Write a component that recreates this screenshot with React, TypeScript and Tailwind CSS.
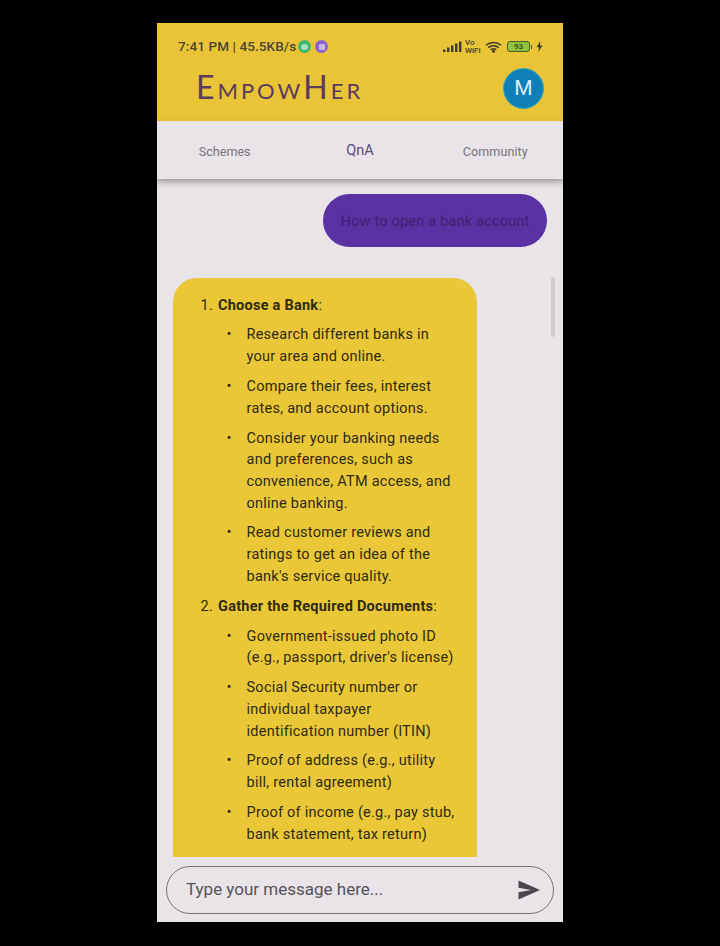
import { ReactNode } from 'react';

const SECTIONS = [
  {
    title: 'Choose a Bank',
    num: '1.',
    items: [
      ['Research different banks in', 'your area and online.'],
      ['Compare their fees, interest', 'rates, and account options.'],
      ['Consider your banking needs', 'and preferences, such as', 'convenience, ATM access, and', 'online banking.'],
      ['Read customer reviews and', 'ratings to get an idea of the', "bank's service quality."],
    ],
  },
  {
    title: 'Gather the Required Documents',
    num: '2.',
    items: [
      ['Government-issued photo ID', "(e.g., passport, driver's license)"],
      ['Social Security number or', 'individual taxpayer', 'identification number (ITIN)'],
      ['Proof of address (e.g., utility', 'bill, rental agreement)'],
      ['Proof of income (e.g., pay stub,', 'bank statement, tax return)'],
    ],
  },
];

function Line({ children }: { children: ReactNode }) {
  return <div className="h-[21.7px] leading-[21.7px] whitespace-nowrap">{children}</div>;
}

function StatusIcons() {
  return (
    <div className="flex items-center text-[#3f3a2a]">
      <svg width="19" height="11" viewBox="0 0 19 11" fill="currentColor">
        <rect x="0" y="8.5" width="2.4" height="2.5" />
        <rect x="4" y="6.5" width="2.4" height="4.5" />
        <rect x="8" y="4.5" width="2.4" height="6.5" />
        <rect x="12" y="2.5" width="2.4" height="8.5" />
        <rect x="16" y="0.5" width="2.4" height="10.5" />
      </svg>
      <div className="ml-[3px] flex flex-col items-start text-[8px] leading-[8px] font-medium w-[18px]">
        <span>Vo</span>
        <span>WiFi</span>
      </div>
      <svg className="ml-[2px]" width="17" height="12" viewBox="0 0 18 12" fill="none" stroke="currentColor" strokeWidth="1.6">
        <path d="M1 4.2C5.5 0.2 12.5 0.2 17 4.2" />
        <path d="M3.5 6.6C6.6 4 11.4 4 14.5 6.6" />
        <path d="M6 9C7.8 7.7 10.2 7.7 12 9" />
        <circle cx="9" cy="10.6" r="0.8" fill="currentColor" />
      </svg>
      <div className="ml-[5px] flex items-center">
        <div className="w-[23px] h-[11px] rounded-[3px] border border-[#4a5a25] bg-[#8fc43c] flex items-center justify-center text-[8px] leading-none font-medium text-[#33401a]">
          93
        </div>
        <div className="w-[1px] h-[4px] bg-[#4a5a25] ml-[1px]" />
      </div>
      <svg className="ml-[4px]" width="7" height="11" viewBox="0 0 7 11" fill="currentColor">
        <path d="M4.4 0L0.6 6.2H3L2.4 11L6.4 4.5H3.9Z" />
      </svg>
    </div>
  );
}

export default function App() {
  return (
    <div className="h-[946px] bg-black flex justify-center pt-[23px] font-['Roboto',sans-serif]">
      <div className="w-[406px] h-[899px] bg-[#e8e4e8] flex flex-col overflow-hidden">
        <header className="h-[98px] shrink-0 bg-[#e9c437] flex flex-col">
          <div className="flex items-center justify-between pl-[21px] pr-[20px] pt-[14px] h-[33px]">
            <div className="flex items-center text-[13.5px] tracking-[0.1px] leading-none font-medium text-[#4a4431]">
              <span>7:41 PM | 45.5KB/s</span>
              <span className="ml-[2px] w-[13px] h-[13px] rounded-full bg-[#3fb56f] flex items-center justify-center">
                <span className="w-[7px] h-[6px] rounded-full bg-[#a5dfc0]" />
              </span>
              <span className="ml-[4px] w-[13px] h-[13px] rounded-full bg-[#8a62cf] flex items-center justify-center">
                <span className="w-[6px] h-[6px] rounded-[1px] bg-[#cbb6ea]" />
              </span>
            </div>
            <StatusIcons />
          </div>
          <div className="flex items-center justify-between pl-[39px] pr-[19px] mt-[12px]">
            <span
              className="font-['Lato',sans-serif] text-[32px] leading-none text-[#5b3a5e] tracking-[3px] -mt-[3px]"
              style={{ fontVariant: 'small-caps' }}
            >
              EmpowHer
            </span>
            <div className="w-[41px] h-[41px] rounded-full bg-[#0f7fba] border border-[#3fa9b0] flex items-center justify-center text-[21px] text-[#dcecf5]">
              M
            </div>
          </div>
        </header>

        <nav className="h-[58px] shrink-0 bg-[#e8e4e8] grid grid-cols-3 items-center text-center pt-[5px] shadow-[0_3px_6px_rgba(60,55,60,0.45)] z-10">
          <span className="text-[12.5px] tracking-[0.05px] text-[#77727c]">Schemes</span>
          <span className="text-[14.5px] text-[#5c4a82] -mt-[3px]">QnA</span>
          <span className="text-[12.5px] tracking-[0.1px] text-[#77727c]">Community</span>
        </nav>

        <main className="relative flex-1 min-h-0 overflow-hidden flex flex-col pl-[16px] pr-[16px] pt-[15px]">
          <div className="self-end h-[53px] w-[224px] pt-[2px] rounded-full bg-[#5a32a3] flex items-center justify-center text-[14.5px] tracking-[0.2px] text-[#3c2170] whitespace-nowrap">
            How to open a bank account
          </div>

          <div className="mt-[31px] w-[304px] h-[579px] shrink-0 rounded-t-[24px] bg-[#e9c737] overflow-hidden pt-[16.5px] pl-[27.5px] text-[14.5px] tracking-[0.25px] text-[#302a12]">
            {SECTIONS.map((section) => (
              <div key={section.num} className="mb-[8.2px]">
                <Line>
                  <div className="flex">
                    <span className="w-[17.5px]">{section.num}</span>
                    <span>
                      <b className="font-bold">{section.title}</b>:
                    </span>
                  </div>
                </Line>
                {section.items.map((lines) => (
                  <div key={lines[0]} className="flex mt-[8.2px] pl-[26px]">
                    <span className="w-[20px] leading-[21.7px] text-[15px]">•</span>
                    <div>
                      {lines.map((line) => (
                        <Line key={line}>{line}</Line>
                      ))}
                    </div>
                  </div>
                ))}
              </div>
            ))}
          </div>

          {/* scroll thumb */}
          <div className="absolute right-[8px] top-[98px] w-[4px] h-[60px] rounded-full bg-[#cfccd0]" />
        </main>

        <div className="shrink-0 h-[65px] pt-[9px] pl-[9px] pr-[9px]">
          <div className="h-[48px] rounded-full border border-[#77737a] flex items-center justify-between pl-[19px] pr-[12px]">
            <span className="text-[17px] text-[#57525a]">Type your message here...</span>
            <svg width="24" height="20" viewBox="0 0 24 20" fill="#4a464e">
              <path d="M1.5 0.5L23 10L1.5 19.5V12.2L14 10L1.5 7.8Z" />
            </svg>
          </div>
        </div>
      </div>
    </div>
  );
}
